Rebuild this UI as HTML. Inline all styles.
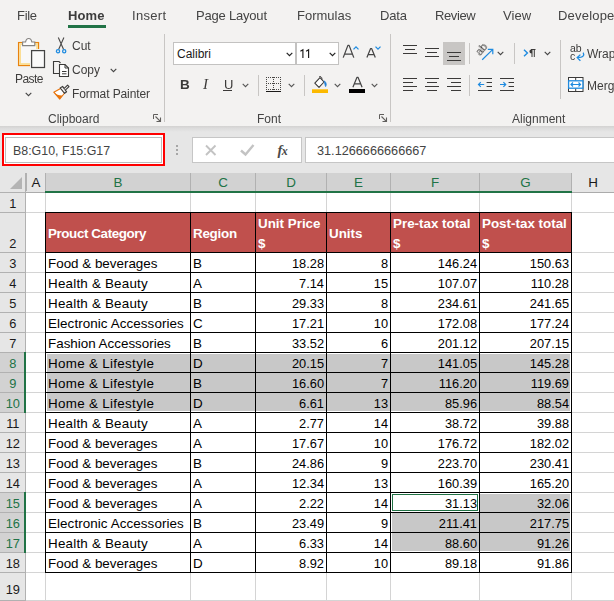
<!DOCTYPE html>
<html><head><meta charset="utf-8"><title>Excel</title>
<style>
html,body{margin:0;padding:0;width:614px;height:601px;overflow:hidden;}
body{width:614px;height:601px;overflow:hidden;position:relative;background:#f3f2f1;font-family:"Liberation Sans",sans-serif;color:#323130;}
#root{position:relative;width:614px;height:601px;overflow:hidden;background:#f3f2f1;}
.abs,.t,.c,.ln,.rh,.ch{position:absolute;}
.t{white-space:nowrap;font-size:13px;line-height:16px;color:#3f3e3d;will-change:transform;}
.tab{color:#444;}
#nb,#fv,#tCal{will-change:auto;}
.rb{font-size:12px;}
.lbl{font-size:12px;color:#444;}
.sep{position:absolute;width:1px;background:#c8c6c4;}
.c{white-space:nowrap;font-size:13.4px;line-height:20px;color:#000;height:20px;}
.r{text-align:right;}
.n{font-size:12.8px;}
.rh{left:0;width:25.6px;text-align:center;font-size:12.8px;color:#262626;line-height:20px;}
.ch{top:173px;height:18px;text-align:center;font-size:13.4px;line-height:19px;color:#262626;}
.ln{background:#d4d4d4;}
.bk{background:#000;}
.hd{color:#fff;font-weight:bold;font-size:13.4px;line-height:20px;white-space:nowrap;position:absolute;}
svg{position:absolute;overflow:visible;}
</style></head><body><div id="root">

<div class="t tab" style="left:17px;top:8px;letter-spacing:-0.3px;">File</div>
<div class="t tab" style="left:68px;top:8px;letter-spacing:0.1px;font-weight:bold;color:#3c3c3c;">Home</div>
<div class="t tab" style="left:132px;top:8px;letter-spacing:0.3px;">Insert</div>
<div class="t tab" style="left:196px;top:8px;letter-spacing:-0.2px;">Page Layout</div>
<div class="t tab" style="left:297px;top:8px;letter-spacing:0px;">Formulas</div>
<div class="t tab" style="left:379.5px;top:8px;letter-spacing:-0.2px;">Data</div>
<div class="t tab" style="left:435px;top:8px;letter-spacing:-0.4px;">Review</div>
<div class="t tab" style="left:503px;top:8px;letter-spacing:0.1px;">View</div>
<div class="t tab" style="left:558px;top:8px;letter-spacing:0.2px;">Developer</div>
<div class="abs" style="left:68px;top:25px;width:38px;height:3px;background:#217346;"></div>
<!-- Clipboard group -->
<svg style="left:17px;top:37px" width="30" height="32" viewBox="0 0 30 32">
  <rect x="1.6" y="5.6" width="19.9" height="22.9" fill="#f8f8f8" stroke="#e8820e" stroke-width="1.3"/>
  <rect x="3.1" y="7.1" width="16.9" height="19.9" fill="none" stroke="#fbdd90" stroke-width="1.7"/>
  <path d="M5.6 8.6 L5.6 5 L8.6 5 C9 2.4 10.4 1.5 11.7 1.5 C13 1.5 14.4 2.4 14.8 5 L17.8 5 L17.8 8.6 Z" fill="#fdfdfd" stroke="#858381" stroke-width="1.1"/>
  <rect x="13" y="12" width="16.4" height="20" fill="#f5f4f3"/>
  <rect x="14.6" y="13.6" width="12.9" height="16.9" fill="#fafafa" stroke="#444" stroke-width="1.25"/>
</svg>
<div class="t rb" style="left:15px;top:71px;letter-spacing:-0.55px;" id="tPaste">Paste</div>
<svg style="left:25px;top:92px" width="7" height="5" viewBox="0 0 7 5"><path d="M0.7 0.8 L3.5 3.6 L6.3 0.8" stroke="#444" stroke-width="1.1" fill="none"/></svg>
<!-- Cut -->
<svg style="left:55px;top:37px" width="12" height="17" viewBox="0 0 12 17">
  <path d="M3.3 0.6 L8.6 12.4 M8.9 0.6 L3.6 12.4" stroke="#4a4948" stroke-width="1.1" fill="none"/>
  <circle cx="3" cy="14.2" r="1.6" fill="#f3f2f1" stroke="#1e8be0" stroke-width="1.3"/>
  <circle cx="9.2" cy="14.2" r="1.6" fill="#f3f2f1" stroke="#1e8be0" stroke-width="1.3"/>
</svg>
<div class="t rb" style="left:72px;top:38px;" id="tCut">Cut</div>
<!-- Copy -->
<svg style="left:52px;top:60px" width="18" height="18" viewBox="0 0 18 18">
  <path d="M7.5 13.5 L1.5 13.5 L1.5 1.5 L7 1.5 L8.5 3" fill="none" stroke="#3b3a39" stroke-width="1.1"/>
  <path d="M7.5 4.5 L13 4.5 L16.5 8 L16.5 16.5 L7.5 16.5 Z" fill="#fff" stroke="#3b3a39" stroke-width="1.1"/>
  <path d="M13 4.5 L13 8 L16.5 8" fill="none" stroke="#3b3a39" stroke-width="1"/>
  <path d="M10 11.5 L14.5 11.5 M10 13.8 L14.5 13.8" stroke="#3b3a39" stroke-width="1"/>
</svg>
<div class="t rb" style="left:72px;top:62px;" id="tCopy">Copy</div>
<svg style="left:110px;top:68px" width="7" height="5" viewBox="0 0 7 5"><path d="M0.7 0.8 L3.5 3.6 L6.3 0.8" stroke="#444" stroke-width="1.1" fill="none"/></svg>
<!-- Format painter -->
<svg style="left:53px;top:84px" width="17" height="16" viewBox="0 0 17 16">
  <path d="M0.8 8.2 L8 4.2 L11.6 9 L6.8 15 Z" fill="#fff" stroke="#e8740c" stroke-width="1.2" stroke-linejoin="round"/>
  <path d="M0.8 8.2 L6.8 15 L9.6 11.5 C6.5 11.8 3.5 10.6 0.8 8.2 Z" fill="#e8740c"/>
  <path d="M7.2 4 L9.6 2.4 L13.6 7.8 L11.6 9.4 Z" fill="#f3f2f1" stroke="#3b3a39" stroke-width="1.1" stroke-linejoin="round"/>
  <path d="M11 4.6 L14.6 1.2 L16 2.7 L12.3 6.2" fill="#f3f2f1" stroke="#3b3a39" stroke-width="1.1" stroke-linejoin="round"/>
</svg>
<div class="t rb" style="left:72px;top:86px;letter-spacing:-0.1px;" id="tFP">Format Painter</div>
<div class="t lbl" style="left:48px;top:111px;" id="tClip">Clipboard</div>
<svg class="lau" style="left:153px;top:114px" width="9" height="9" viewBox="0 0 9 9"><path d="M0.5 5 L0.5 0.5 L5 0.5" fill="none" stroke="#605e5c" stroke-width="1"/><path d="M2.5 2.5 L7.3 7.3 M7.5 3.5 L7.5 7.5 L3.5 7.5" fill="none" stroke="#605e5c" stroke-width="1.1"/></svg>
<div class="sep" style="left:164px;top:34px;height:88px;"></div>
<!-- Font group -->
<div class="abs" style="left:173px;top:42px;width:166px;height:23px;background:#fff;border:1px solid #c3c2c1;box-sizing:border-box;"></div>
<div class="abs" style="left:295px;top:42px;width:2px;height:23px;background:#c3c2c1;"></div>
<div class="t rb" style="left:177px;top:46px;color:#1b1a19;" id="tCal">Calibri</div>
<svg style="left:286px;top:52px" width="7" height="5" viewBox="0 0 7 5"><path d="M0.7 0.8 L3.5 3.6 L6.3 0.8" stroke="#222" stroke-width="1.2" fill="none"/></svg>
<svg style="left:300px;top:49px" width="11" height="10" viewBox="0 0 11 10"><path d="M0.4 2.2 L2.9 0.7 L2.9 9 M6.1 2.2 L8.6 0.7 L8.6 9" fill="none" stroke="#1b1a19" stroke-width="1.15"/></svg>
<svg style="left:329px;top:52px" width="7" height="5" viewBox="0 0 7 5"><path d="M0.7 0.8 L3.5 3.6 L6.3 0.8" stroke="#222" stroke-width="1.2" fill="none"/></svg>
<svg style="left:342px;top:44px" width="14" height="15" viewBox="0 0 14 15"><path d="M1.2 13.6 L5.9 1.4 L7.1 1.4 L11.8 13.6 M2.8 10 L10.2 10" fill="none" stroke="#444" stroke-width="1.25" stroke-linejoin="round"/></svg>
<svg style="left:352.6px;top:46px" width="6" height="4" viewBox="0 0 6 4"><path d="M0.5 3.4 L3 0.9 L5.5 3.4" stroke="#1e8be0" stroke-width="1.3" fill="none"/></svg>
<svg style="left:366px;top:47px" width="11" height="12" viewBox="0 0 11 12"><path d="M0.9 10.6 L4.6 1.5 L5.6 1.5 L9.3 10.6 M2.2 7.7 L8 7.7" fill="none" stroke="#444" stroke-width="1.2" stroke-linejoin="round"/></svg>
<svg style="left:374.6px;top:46px" width="6" height="4" viewBox="0 0 6 4"><path d="M0.5 0.6 L3 3.1 L5.5 0.6" stroke="#1e8be0" stroke-width="1.3" fill="none"/></svg>
<div class="t" style="left:180px;top:76px;font-size:13.5px;line-height:17px;font-weight:bold;color:#3b3a39;" id="tB">B</div>
<div class="t" style="left:203px;top:76px;font-size:15px;line-height:17px;font-style:italic;color:#3b3a39;font-family:'Liberation Serif',serif;" id="tI">I</div>
<div class="t" style="left:223.5px;top:76px;font-size:13px;line-height:17px;color:#3b3a39;" id="tU">U</div>
<div class="abs" style="left:223px;top:90px;width:9px;height:1px;background:#3b3a39;"></div>
<svg style="left:242px;top:83px" width="7" height="5" viewBox="0 0 7 5"><path d="M0.7 0.8 L3.5 3.6 L6.3 0.8" stroke="#555" stroke-width="1.1" fill="none"/></svg>
<div class="sep" style="left:258px;top:75px;height:21px;"></div>
<svg style="left:266px;top:77px" width="15" height="16" viewBox="0 0 15 16" shape-rendering="crispEdges">
  <path d="M0 0.5 H15 M0 6.5 H15 M0 12.5 H15" stroke="#484644" stroke-width="1" stroke-dasharray="1 1" fill="none"/>
  <path d="M0.5 0 V13 M7.5 0 V13 M14.5 0 V13" stroke="#484644" stroke-width="1" stroke-dasharray="1 1" fill="none"/>
  <path d="M0 14.5 H15" stroke="#1b1a19" stroke-width="1"/>
</svg>
<svg style="left:288px;top:83px" width="7" height="5" viewBox="0 0 7 5"><path d="M0.7 0.8 L3.5 3.6 L6.3 0.8" stroke="#555" stroke-width="1.1" fill="none"/></svg>
<div class="sep" style="left:304px;top:75px;height:21px;"></div>
<!-- fill bucket -->
<svg style="left:312px;top:76px" width="17" height="18" viewBox="0 0 17 18">
  <path d="M2.8 7.2 L8 1.6 L12 6 L7 11.4 Z" fill="#fff" stroke="#3b3a39" stroke-width="1.1" stroke-linejoin="round"/>
  <path d="M7 1 C8.2 -0.2 10 0.6 10 3.6" fill="none" stroke="#3b3a39" stroke-width="1"/>
  <path d="M12.2 4.8 C14.6 6.6 14.6 9 13.6 10.6 C13 9 12.8 7.6 12.2 4.8 Z" fill="#1e7fd6" stroke="#1e7fd6" stroke-width="0.8"/>
  <rect x="0" y="13.3" width="16" height="3.7" fill="#fbb900"/>
</svg>
<svg style="left:334px;top:83px" width="7" height="5" viewBox="0 0 7 5"><path d="M0.7 0.8 L3.5 3.6 L6.3 0.8" stroke="#555" stroke-width="1.1" fill="none"/></svg>
<svg style="left:352px;top:76px" width="12" height="12" viewBox="0 0 12 12"><path d="M0.9 11.2 L5 1.3 L6 1.3 L10.1 11.2 M2.3 7.9 L8.7 7.9" fill="none" stroke="#444" stroke-width="1.2" stroke-linejoin="round"/></svg>
<div class="abs" style="left:349px;top:89px;width:16px;height:4px;background:#000;"></div>
<svg style="left:371px;top:83px" width="7" height="5" viewBox="0 0 7 5"><path d="M0.7 0.8 L3.5 3.6 L6.3 0.8" stroke="#555" stroke-width="1.1" fill="none"/></svg>
<div class="t lbl" style="left:257px;top:111px;" id="tFont">Font</div>
<svg class="lau" style="left:379px;top:114px" width="9" height="9" viewBox="0 0 9 9"><path d="M0.5 5 L0.5 0.5 L5 0.5" fill="none" stroke="#605e5c" stroke-width="1"/><path d="M2.5 2.5 L7.3 7.3 M7.5 3.5 L7.5 7.5 L3.5 7.5" fill="none" stroke="#605e5c" stroke-width="1.1"/></svg>
<div class="sep" style="left:390px;top:34px;height:88px;"></div>
<!-- Alignment group -->
<div class="abs" style="left:443px;top:42px;width:22px;height:23px;background:#c8c6c4;"></div>
<svg style="left:403px;top:45px" width="14" height="10" viewBox="0 0 14 10"><path d="M0 0.5 H14 M2 4.5 H12 M0 8.5 H14" stroke="#3b3a39" stroke-width="1"/></svg>
<svg style="left:425px;top:48px" width="14" height="10" viewBox="0 0 14 10"><path d="M0 0.5 H14 M2 4.5 H12 M0 8.5 H14" stroke="#3b3a39" stroke-width="1"/></svg>
<svg style="left:447px;top:52px" width="14" height="10" viewBox="0 0 14 10"><path d="M0 0.5 H14 M2 4.5 H12 M0 8.5 H14" stroke="#3b3a39" stroke-width="1"/></svg>
<div class="sep" style="left:469px;top:43px;height:21px;"></div>
<!-- orientation -->
<div class="t" style="left:475px;top:42px;font-size:11px;line-height:14px;color:#3b3a39;transform:rotate(-50deg);transform-origin:50% 50%;" id="tab">ab</div>
<svg style="left:481px;top:48px" width="13" height="13" viewBox="0 0 13 13"><path d="M1.2 11.8 L11.6 1.6 M6.8 1.3 L11.8 1.3 L11.8 6.2" fill="none" stroke="#1e8be0" stroke-width="1.2"/></svg>
<svg style="left:497px;top:51px" width="7" height="5" viewBox="0 0 7 5"><path d="M0.7 0.8 L3.5 3.6 L6.3 0.8" stroke="#444" stroke-width="1.1" fill="none"/></svg>
<div class="sep" style="left:514px;top:43px;height:21px;"></div>
<svg style="left:523px;top:49px" width="14" height="9" viewBox="0 0 14 9">
  <path d="M1 0.8 L4.4 4 L1 7.2" fill="none" stroke="#1e8be0" stroke-width="1.4"/>
  <path d="M9 0.5 L9 8 M11.3 0.5 L11.3 8 M8 0.5 L12.5 0.5" stroke="#3b3a39" stroke-width="1" fill="none"/>
  <path d="M9 0.3 C5.6 0.3 5.6 4.6 9 4.6 Z" fill="#3b3a39"/>
</svg>
<svg style="left:544px;top:51px" width="7" height="5" viewBox="0 0 7 5"><path d="M0.7 0.8 L3.5 3.6 L6.3 0.8" stroke="#444" stroke-width="1.1" fill="none"/></svg>
<div class="sep" style="left:560px;top:40px;height:59px;"></div>
<!-- wrap text -->
<div class="t" style="left:570px;top:43px;font-size:10.5px;line-height:11px;color:#3b3a39;letter-spacing:-0.2px;" id="twab">ab</div>
<div class="t" style="left:570px;top:51px;font-size:10.5px;line-height:11px;color:#3b3a39;" id="twc">c</div>
<svg style="left:576px;top:52px" width="9" height="10" viewBox="0 0 9 10"><path d="M7.2 0.6 C8.6 3.4 7.4 5.6 1.4 5.6 M4.4 2.6 L1.2 5.6 L4.4 8.8" fill="none" stroke="#1e8be0" stroke-width="1.3"/></svg>
<div class="t rb" style="left:587px;top:46px;" id="tWrap">Wrap Text</div>
<!-- row 2 align -->
<svg style="left:403px;top:78px" width="14" height="14" viewBox="0 0 14 14"><path d="M0 0.5 H14 M0 4.5 H10 M0 8.5 H14 M0 12.5 H10" stroke="#3b3a39" stroke-width="1"/></svg>
<svg style="left:425px;top:78px" width="14" height="14" viewBox="0 0 14 14"><path d="M0 0.5 H14 M2 4.5 H12 M0 8.5 H14 M2 12.5 H12" stroke="#3b3a39" stroke-width="1"/></svg>
<svg style="left:447px;top:78px" width="14" height="14" viewBox="0 0 14 14"><path d="M0 0.5 H14 M4 4.5 H14 M0 8.5 H14 M4 12.5 H14" stroke="#3b3a39" stroke-width="1"/></svg>
<div class="sep" style="left:469px;top:75px;height:21px;"></div>
<svg style="left:478px;top:78px" width="14" height="14" viewBox="0 0 14 14"><path d="M0 0.5 H14 M8.6 4.5 H14 M8.6 8.5 H14 M0 12.5 H14" stroke="#3b3a39" stroke-width="1"/><path d="M0.6 6.5 H6.2 M2.8 4.2 L0.5 6.5 L2.8 8.8" fill="none" stroke="#1e8be0" stroke-width="1.2"/></svg>
<svg style="left:500px;top:78px" width="14" height="14" viewBox="0 0 14 14"><path d="M0 0.5 H14 M8.6 4.5 H14 M8.6 8.5 H14 M0 12.5 H14" stroke="#3b3a39" stroke-width="1"/><path d="M0 6.5 H5.6 M3.4 4.2 L5.7 6.5 L3.4 8.8" fill="none" stroke="#1e8be0" stroke-width="1.2"/></svg>
<!-- merge -->
<svg style="left:568px;top:77px" width="16" height="15" viewBox="0 0 16 15">
  <rect x="0.5" y="0.5" width="14.5" height="14" fill="#fff" stroke="#3b3a39" stroke-width="1"/>
  <path d="M7.7 0.5 V3.6 M7.7 11.4 V14.5" stroke="#3b3a39" stroke-width="1"/>
  <rect x="0.6" y="3.8" width="14.3" height="7.4" fill="#fff" stroke="#1e8be0" stroke-width="1.3"/>
  <path d="M3 7.5 H12.5 M5 5.5 L3 7.5 L5 9.5 M10.5 5.5 L12.5 7.5 L10.5 9.5" fill="none" stroke="#1e8be0" stroke-width="1.2"/>
</svg>
<div class="t rb" style="left:587px;top:78px;" id="tMerge">Merge &amp; Center</div>
<div class="t lbl" style="left:512px;top:111px;" id="tAlign">Alignment</div>

<div class="abs" style="left:0;top:126px;width:614px;height:6px;background:linear-gradient(#d3d2d1,#dcdcdc 40%,#e6e6e6);"></div>
<div class="abs" style="left:0;top:132px;width:614px;height:469px;background:#e6e6e6;"></div>
<div class="abs" style="left:2px;top:133px;width:163px;height:33px;border:2px solid #f00;box-sizing:border-box;background:#fff;"></div>
<div class="abs" style="left:5px;top:137px;width:157px;height:26px;background:#fff;border:1px solid #bdbdbd;box-sizing:border-box;"></div>
<div class="t" style="left:13px;top:143px;font-size:12.4px;color:#444;" id="nb">B8:G10, F15:G17</div>
<div class="abs" style="left:176px;top:145px;width:2px;height:2px;background:#a6a6a6;"></div>
<div class="abs" style="left:176px;top:149px;width:2px;height:2px;background:#a6a6a6;"></div>
<div class="abs" style="left:176px;top:153px;width:2px;height:2px;background:#a6a6a6;"></div>
<div class="abs" style="left:192px;top:137px;width:110px;height:26px;background:#fff;border:1px solid #c6c6c6;box-sizing:border-box;"></div>
<svg style="left:205px;top:145px" width="12" height="11" viewBox="0 0 12 11"><path d="M1 0.5 L10.5 10 M10.5 0.5 L1 10" stroke="#c3c3c3" stroke-width="1.9" fill="none"/></svg>
<svg style="left:240px;top:144px" width="15" height="12" viewBox="0 0 15 12"><path d="M1 6.5 L5.5 10.5 L13.5 1" stroke="#c3c3c3" stroke-width="2.4" fill="none"/></svg>
<div class="abs" style="left:277.5px;top:141px;font-family:'Liberation Serif',serif;font-style:italic;font-weight:bold;font-size:14.5px;line-height:18px;color:#4a4a4a;letter-spacing:-0.5px;" id="fx">f<span style="font-size:12px;">x</span></div>
<div class="abs" style="left:305px;top:137px;width:320px;height:26px;background:#fff;border:1px solid #c6c6c6;box-sizing:border-box;"></div>
<div class="t" style="left:317px;top:143px;font-size:12.7px;color:#444;" id="fv">31.1266666666667</div>
<div class="abs" style="left:0;top:172px;width:614px;height:429px;background:#fff;"></div>
<div class="abs" style="left:0;top:172px;width:614px;height:20px;background:#e6e6e6;"></div>
<div class="abs" style="left:0;top:172px;width:26px;height:429px;background:#e6e6e6;"></div>
<div class="abs" style="left:46px;top:173px;width:526px;height:18px;background:#d2d2d2;"></div>
<svg style="left:10px;top:177px" width="13" height="13" viewBox="0 0 13 13"><path d="M12 0 L12 12 L0 12 Z" fill="#b4b4b4"/></svg>
<div class="ch" style="left:27px;width:18px;color:#1a1a1a;">A</div>
<div class="ln" style="left:26px;top:173px;width:1px;height:18px;background:#b1b1b1;"></div>
<div class="ch" style="left:46px;width:144px;color:#217346;">B</div>
<div class="ln" style="left:45px;top:173px;width:1px;height:18px;background:#b1b1b1;"></div>
<div class="ch" style="left:191px;width:64px;color:#217346;">C</div>
<div class="ln" style="left:190px;top:173px;width:1px;height:18px;background:#b1b1b1;"></div>
<div class="ch" style="left:256px;width:70px;color:#217346;">D</div>
<div class="ln" style="left:255px;top:173px;width:1px;height:18px;background:#b1b1b1;"></div>
<div class="ch" style="left:327px;width:63px;color:#217346;">E</div>
<div class="ln" style="left:326px;top:173px;width:1px;height:18px;background:#b1b1b1;"></div>
<div class="ch" style="left:391px;width:88px;color:#217346;">F</div>
<div class="ln" style="left:390px;top:173px;width:1px;height:18px;background:#b1b1b1;"></div>
<div class="ch" style="left:480px;width:91px;color:#217346;">G</div>
<div class="ln" style="left:479px;top:173px;width:1px;height:18px;background:#b1b1b1;"></div>
<div class="ch" style="left:572px;width:42px;color:#1a1a1a;">H</div>
<div class="ln" style="left:571px;top:173px;width:1px;height:18px;background:#b1b1b1;"></div>
<div class="ln" style="left:571px;top:173px;width:1px;height:18px;background:#b1b1b1;"></div>
<div class="abs" style="left:0;top:353px;width:24px;height:19px;background:#d2d2d2;"></div>
<div class="abs" style="left:0;top:373px;width:24px;height:19px;background:#d2d2d2;"></div>
<div class="abs" style="left:0;top:393px;width:24px;height:19px;background:#d2d2d2;"></div>
<div class="abs" style="left:0;top:493px;width:24px;height:19px;background:#d2d2d2;"></div>
<div class="abs" style="left:0;top:513px;width:24px;height:19px;background:#d2d2d2;"></div>
<div class="abs" style="left:0;top:533px;width:24px;height:19px;background:#d2d2d2;"></div>
<div class="rh" style="top:194.3px;color:#1a1a1a;">1</div>
<div class="ln" style="left:0;top:192px;width:25px;height:1px;background:#b1b1b1;"></div>
<div class="rh" style="top:233.8px;color:#1a1a1a;">2</div>
<div class="ln" style="left:0;top:212px;width:25px;height:1px;background:#b1b1b1;"></div>
<div class="rh" style="top:254.3px;color:#1a1a1a;">3</div>
<div class="ln" style="left:0;top:252px;width:25px;height:1px;background:#b1b1b1;"></div>
<div class="rh" style="top:274.3px;color:#1a1a1a;">4</div>
<div class="ln" style="left:0;top:272px;width:25px;height:1px;background:#b1b1b1;"></div>
<div class="rh" style="top:294.3px;color:#1a1a1a;">5</div>
<div class="ln" style="left:0;top:292px;width:25px;height:1px;background:#b1b1b1;"></div>
<div class="rh" style="top:314.3px;color:#1a1a1a;">6</div>
<div class="ln" style="left:0;top:312px;width:25px;height:1px;background:#b1b1b1;"></div>
<div class="rh" style="top:334.3px;color:#1a1a1a;">7</div>
<div class="ln" style="left:0;top:332px;width:25px;height:1px;background:#b1b1b1;"></div>
<div class="rh" style="top:354.3px;color:#217346;">8</div>
<div class="ln" style="left:0;top:352px;width:25px;height:1px;background:#b1b1b1;"></div>
<div class="rh" style="top:374.3px;color:#217346;">9</div>
<div class="ln" style="left:0;top:372px;width:25px;height:1px;background:#b1b1b1;"></div>
<div class="rh" style="top:394.3px;color:#217346;">10</div>
<div class="ln" style="left:0;top:392px;width:25px;height:1px;background:#b1b1b1;"></div>
<div class="rh" style="top:414.3px;color:#1a1a1a;">11</div>
<div class="ln" style="left:0;top:412px;width:25px;height:1px;background:#b1b1b1;"></div>
<div class="rh" style="top:434.3px;color:#1a1a1a;">12</div>
<div class="ln" style="left:0;top:432px;width:25px;height:1px;background:#b1b1b1;"></div>
<div class="rh" style="top:454.3px;color:#1a1a1a;">13</div>
<div class="ln" style="left:0;top:452px;width:25px;height:1px;background:#b1b1b1;"></div>
<div class="rh" style="top:474.3px;color:#1a1a1a;">14</div>
<div class="ln" style="left:0;top:472px;width:25px;height:1px;background:#b1b1b1;"></div>
<div class="rh" style="top:494.3px;color:#217346;">15</div>
<div class="ln" style="left:0;top:492px;width:25px;height:1px;background:#b1b1b1;"></div>
<div class="rh" style="top:514.3px;color:#217346;">16</div>
<div class="ln" style="left:0;top:512px;width:25px;height:1px;background:#b1b1b1;"></div>
<div class="rh" style="top:534.3px;color:#217346;">17</div>
<div class="ln" style="left:0;top:532px;width:25px;height:1px;background:#b1b1b1;"></div>
<div class="rh" style="top:554.3px;color:#1a1a1a;">18</div>
<div class="ln" style="left:0;top:552px;width:25px;height:1px;background:#b1b1b1;"></div>
<div class="rh" style="top:580px;color:#1a1a1a;">19</div>
<div class="ln" style="left:0;top:572px;width:25px;height:1px;background:#b1b1b1;"></div>
<div class="rh" style="top:602.3px;color:#1a1a1a;">20</div>
<div class="ln" style="left:0;top:600px;width:25px;height:1px;background:#b1b1b1;"></div>
<div class="ln" style="left:25px;top:173px;width:1px;height:428px;background:#b1b1b1;"></div>
<div class="ln" style="left:45px;top:192px;width:1px;height:409px;"></div>
<div class="ln" style="left:190px;top:192px;width:1px;height:409px;"></div>
<div class="ln" style="left:255px;top:192px;width:1px;height:409px;"></div>
<div class="ln" style="left:326px;top:192px;width:1px;height:409px;"></div>
<div class="ln" style="left:390px;top:192px;width:1px;height:409px;"></div>
<div class="ln" style="left:479px;top:192px;width:1px;height:409px;"></div>
<div class="ln" style="left:571px;top:192px;width:1px;height:409px;"></div>
<div class="abs" style="left:24px;top:352px;width:2px;height:61px;background:#217346;"></div>
<div class="abs" style="left:24px;top:492px;width:2px;height:61px;background:#217346;"></div>
<div class="ln" style="left:26px;top:192px;width:588px;height:1px;"></div>
<div class="ln" style="left:26px;top:212px;width:588px;height:1px;"></div>
<div class="ln" style="left:26px;top:252px;width:588px;height:1px;"></div>
<div class="ln" style="left:26px;top:272px;width:588px;height:1px;"></div>
<div class="ln" style="left:26px;top:292px;width:588px;height:1px;"></div>
<div class="ln" style="left:26px;top:312px;width:588px;height:1px;"></div>
<div class="ln" style="left:26px;top:332px;width:588px;height:1px;"></div>
<div class="ln" style="left:26px;top:352px;width:588px;height:1px;"></div>
<div class="ln" style="left:26px;top:372px;width:588px;height:1px;"></div>
<div class="ln" style="left:26px;top:392px;width:588px;height:1px;"></div>
<div class="ln" style="left:26px;top:412px;width:588px;height:1px;"></div>
<div class="ln" style="left:26px;top:432px;width:588px;height:1px;"></div>
<div class="ln" style="left:26px;top:452px;width:588px;height:1px;"></div>
<div class="ln" style="left:26px;top:472px;width:588px;height:1px;"></div>
<div class="ln" style="left:26px;top:492px;width:588px;height:1px;"></div>
<div class="ln" style="left:26px;top:512px;width:588px;height:1px;"></div>
<div class="ln" style="left:26px;top:532px;width:588px;height:1px;"></div>
<div class="ln" style="left:26px;top:552px;width:588px;height:1px;"></div>
<div class="ln" style="left:26px;top:572px;width:588px;height:1px;"></div>
<div class="ln" style="left:26px;top:600px;width:588px;height:1px;"></div>
<div class="abs" style="left:26px;top:192px;width:588px;height:1px;background:#ababab;"></div>
<div class="abs" style="left:45px;top:191px;width:527px;height:2px;background:#217346;"></div>
<div class="abs" style="left:45px;top:212px;width:527px;height:41px;background:#c0504d;"></div>
<div class="abs" style="left:47px;top:354px;width:523px;height:57px;background:#c8c8c8;"></div>
<div class="abs" style="left:392px;top:513px;width:88px;height:38px;background:#c8c8c8;"></div>
<div class="abs" style="left:480px;top:494px;width:90px;height:57px;background:#c8c8c8;"></div>
<div class="ln bk" style="left:45px;top:212px;width:1px;height:361px;"></div>
<div class="ln bk" style="left:190px;top:212px;width:1px;height:361px;"></div>
<div class="ln bk" style="left:255px;top:212px;width:1px;height:361px;"></div>
<div class="ln bk" style="left:326px;top:212px;width:1px;height:361px;"></div>
<div class="ln bk" style="left:390px;top:212px;width:1px;height:361px;"></div>
<div class="ln bk" style="left:479px;top:212px;width:1px;height:361px;"></div>
<div class="ln bk" style="left:571px;top:212px;width:1px;height:361px;"></div>
<div class="ln bk" style="left:45px;top:212px;width:527px;height:1px;"></div>
<div class="ln bk" style="left:45px;top:252px;width:527px;height:1px;"></div>
<div class="ln bk" style="left:45px;top:272px;width:527px;height:1px;"></div>
<div class="ln bk" style="left:45px;top:292px;width:527px;height:1px;"></div>
<div class="ln bk" style="left:45px;top:312px;width:527px;height:1px;"></div>
<div class="ln bk" style="left:45px;top:332px;width:527px;height:1px;"></div>
<div class="ln bk" style="left:45px;top:352px;width:527px;height:1px;"></div>
<div class="ln bk" style="left:45px;top:372px;width:527px;height:1px;"></div>
<div class="ln bk" style="left:45px;top:392px;width:527px;height:1px;"></div>
<div class="ln bk" style="left:45px;top:412px;width:527px;height:1px;"></div>
<div class="ln bk" style="left:45px;top:432px;width:527px;height:1px;"></div>
<div class="ln bk" style="left:45px;top:452px;width:527px;height:1px;"></div>
<div class="ln bk" style="left:45px;top:472px;width:527px;height:1px;"></div>
<div class="ln bk" style="left:45px;top:492px;width:527px;height:1px;"></div>
<div class="ln bk" style="left:45px;top:512px;width:527px;height:1px;"></div>
<div class="ln bk" style="left:45px;top:532px;width:527px;height:1px;"></div>
<div class="ln bk" style="left:45px;top:552px;width:527px;height:1px;"></div>
<div class="ln bk" style="left:45px;top:572px;width:527px;height:1px;"></div>
<div class="abs" style="left:392px;top:494px;width:86px;height:17px;background:#fff;border:1px solid #217346;box-sizing:border-box;"></div>
<div class="abs" style="left:570px;top:353px;width:1px;height:59px;background:#fff;"></div>
<div class="abs" style="left:570px;top:493px;width:1px;height:59px;background:#fff;"></div>
<div class="hd" style="left:48px;top:224px;letter-spacing:-0.4px;">Prouct Category</div>
<div class="hd" style="left:193px;top:224px;letter-spacing:-0.25px;">Region</div>
<div class="hd" style="left:258px;top:214px;letter-spacing:0px;">Unit Price</div>
<div class="hd" style="left:258px;top:234px;">$</div>
<div class="hd" style="left:329px;top:224px;letter-spacing:0px;">Units</div>
<div class="hd" style="left:393px;top:214px;letter-spacing:0px;">Pre-tax total</div>
<div class="hd" style="left:393px;top:234px;">$</div>
<div class="hd" style="left:482px;top:214px;letter-spacing:0px;">Post-tax total</div>
<div class="hd" style="left:482px;top:234px;">$</div>
<div class="c" style="left:48px;top:254px;letter-spacing:0px;">Food &amp; beverages</div>
<div class="c" style="left:193px;top:254px;">B</div>
<div class="c r n" style="left:256px;width:68px;top:254px;">18.28</div>
<div class="c r n" style="left:327px;width:61px;top:254px;">8</div>
<div class="c r n" style="left:391px;width:86px;top:254px;">146.24</div>
<div class="c r n" style="left:480px;width:89px;top:254px;">150.63</div>
<div class="c" style="left:48px;top:274px;letter-spacing:0.21px;">Health &amp; Beauty</div>
<div class="c" style="left:193px;top:274px;">A</div>
<div class="c r n" style="left:256px;width:68px;top:274px;">7.14</div>
<div class="c r n" style="left:327px;width:61px;top:274px;">15</div>
<div class="c r n" style="left:391px;width:86px;top:274px;">107.07</div>
<div class="c r n" style="left:480px;width:89px;top:274px;">110.28</div>
<div class="c" style="left:48px;top:294px;letter-spacing:0.21px;">Health &amp; Beauty</div>
<div class="c" style="left:193px;top:294px;">B</div>
<div class="c r n" style="left:256px;width:68px;top:294px;">29.33</div>
<div class="c r n" style="left:327px;width:61px;top:294px;">8</div>
<div class="c r n" style="left:391px;width:86px;top:294px;">234.61</div>
<div class="c r n" style="left:480px;width:89px;top:294px;">241.65</div>
<div class="c" style="left:48px;top:314px;letter-spacing:0.085px;">Electronic Accessories</div>
<div class="c" style="left:193px;top:314px;">C</div>
<div class="c r n" style="left:256px;width:68px;top:314px;">17.21</div>
<div class="c r n" style="left:327px;width:61px;top:314px;">10</div>
<div class="c r n" style="left:391px;width:86px;top:314px;">172.08</div>
<div class="c r n" style="left:480px;width:89px;top:314px;">177.24</div>
<div class="c" style="left:48px;top:334px;letter-spacing:0px;">Fashion Accessories</div>
<div class="c" style="left:193px;top:334px;">B</div>
<div class="c r n" style="left:256px;width:68px;top:334px;">33.52</div>
<div class="c r n" style="left:327px;width:61px;top:334px;">6</div>
<div class="c r n" style="left:391px;width:86px;top:334px;">201.12</div>
<div class="c r n" style="left:480px;width:89px;top:334px;">207.15</div>
<div class="c" style="left:48px;top:354px;letter-spacing:0.31px;">Home &amp; Lifestyle</div>
<div class="c" style="left:193px;top:354px;">D</div>
<div class="c r n" style="left:256px;width:68px;top:354px;">20.15</div>
<div class="c r n" style="left:327px;width:61px;top:354px;">7</div>
<div class="c r n" style="left:391px;width:86px;top:354px;">141.05</div>
<div class="c r n" style="left:480px;width:89px;top:354px;">145.28</div>
<div class="c" style="left:48px;top:374px;letter-spacing:0.31px;">Home &amp; Lifestyle</div>
<div class="c" style="left:193px;top:374px;">B</div>
<div class="c r n" style="left:256px;width:68px;top:374px;">16.60</div>
<div class="c r n" style="left:327px;width:61px;top:374px;">7</div>
<div class="c r n" style="left:391px;width:86px;top:374px;">116.20</div>
<div class="c r n" style="left:480px;width:89px;top:374px;">119.69</div>
<div class="c" style="left:48px;top:394px;letter-spacing:0.31px;">Home &amp; Lifestyle</div>
<div class="c" style="left:193px;top:394px;">D</div>
<div class="c r n" style="left:256px;width:68px;top:394px;">6.61</div>
<div class="c r n" style="left:327px;width:61px;top:394px;">13</div>
<div class="c r n" style="left:391px;width:86px;top:394px;">85.96</div>
<div class="c r n" style="left:480px;width:89px;top:394px;">88.54</div>
<div class="c" style="left:48px;top:414px;letter-spacing:0.21px;">Health &amp; Beauty</div>
<div class="c" style="left:193px;top:414px;">A</div>
<div class="c r n" style="left:256px;width:68px;top:414px;">2.77</div>
<div class="c r n" style="left:327px;width:61px;top:414px;">14</div>
<div class="c r n" style="left:391px;width:86px;top:414px;">38.72</div>
<div class="c r n" style="left:480px;width:89px;top:414px;">39.88</div>
<div class="c" style="left:48px;top:434px;letter-spacing:0px;">Food &amp; beverages</div>
<div class="c" style="left:193px;top:434px;">A</div>
<div class="c r n" style="left:256px;width:68px;top:434px;">17.67</div>
<div class="c r n" style="left:327px;width:61px;top:434px;">10</div>
<div class="c r n" style="left:391px;width:86px;top:434px;">176.72</div>
<div class="c r n" style="left:480px;width:89px;top:434px;">182.02</div>
<div class="c" style="left:48px;top:454px;letter-spacing:0px;">Food &amp; beverages</div>
<div class="c" style="left:193px;top:454px;">B</div>
<div class="c r n" style="left:256px;width:68px;top:454px;">24.86</div>
<div class="c r n" style="left:327px;width:61px;top:454px;">9</div>
<div class="c r n" style="left:391px;width:86px;top:454px;">223.70</div>
<div class="c r n" style="left:480px;width:89px;top:454px;">230.41</div>
<div class="c" style="left:48px;top:474px;letter-spacing:0px;">Food &amp; beverages</div>
<div class="c" style="left:193px;top:474px;">A</div>
<div class="c r n" style="left:256px;width:68px;top:474px;">12.34</div>
<div class="c r n" style="left:327px;width:61px;top:474px;">13</div>
<div class="c r n" style="left:391px;width:86px;top:474px;">160.39</div>
<div class="c r n" style="left:480px;width:89px;top:474px;">165.20</div>
<div class="c" style="left:48px;top:494px;letter-spacing:0px;">Food &amp; beverages</div>
<div class="c" style="left:193px;top:494px;">A</div>
<div class="c r n" style="left:256px;width:68px;top:494px;">2.22</div>
<div class="c r n" style="left:327px;width:61px;top:494px;">14</div>
<div class="c r n" style="left:391px;width:86px;top:494px;">31.13</div>
<div class="c r n" style="left:480px;width:89px;top:494px;">32.06</div>
<div class="c" style="left:48px;top:514px;letter-spacing:0.085px;">Electronic Accessories</div>
<div class="c" style="left:193px;top:514px;">B</div>
<div class="c r n" style="left:256px;width:68px;top:514px;">23.49</div>
<div class="c r n" style="left:327px;width:61px;top:514px;">9</div>
<div class="c r n" style="left:391px;width:86px;top:514px;">211.41</div>
<div class="c r n" style="left:480px;width:89px;top:514px;">217.75</div>
<div class="c" style="left:48px;top:534px;letter-spacing:0.21px;">Health &amp; Beauty</div>
<div class="c" style="left:193px;top:534px;">A</div>
<div class="c r n" style="left:256px;width:68px;top:534px;">6.33</div>
<div class="c r n" style="left:327px;width:61px;top:534px;">14</div>
<div class="c r n" style="left:391px;width:86px;top:534px;">88.60</div>
<div class="c r n" style="left:480px;width:89px;top:534px;">91.26</div>
<div class="c" style="left:48px;top:554px;letter-spacing:0px;">Food &amp; beverages</div>
<div class="c" style="left:193px;top:554px;">D</div>
<div class="c r n" style="left:256px;width:68px;top:554px;">8.92</div>
<div class="c r n" style="left:327px;width:61px;top:554px;">10</div>
<div class="c r n" style="left:391px;width:86px;top:554px;">89.18</div>
<div class="c r n" style="left:480px;width:89px;top:554px;">91.86</div>
</div></body></html>
